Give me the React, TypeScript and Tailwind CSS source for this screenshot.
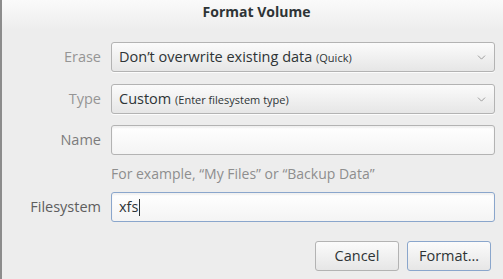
import { ChevronDown } from "lucide-react";

const font = { fontFamily: '"Open Sans", "Noto Sans", sans-serif' };

function Select({ main, hint }: { main: string; hint: string }) {
  return (
    <div className="flex h-[30px] items-center justify-between rounded-[3px] border border-[#b3b3b3] bg-gradient-to-b from-[#fbfbfb] to-[#e6e6e6] pl-[7px] pr-[6px] shadow-[0_1px_0_rgba(255,255,255,0.8)]">
      <span className="text-[14.5px] text-[#2e3436]">
        {main} <span className="text-[11px]">{hint}</span>
      </span>
      <ChevronDown className="h-[13px] w-[13px] text-[#8a8a8a]" strokeWidth={1.5} />
    </div>
  );
}

function Field({ value, focused }: { value?: string; focused?: boolean }) {
  return (
    <div
      className={`flex h-[30px] items-center rounded-[3px] border bg-gradient-to-b from-[#ffffff] to-[#f4f4f4] px-[7px] shadow-[inset_0_2px_2px_rgba(0,0,0,0.06)] ${
        focused ? "border-[#8aa6cc]" : "border-[#b3b3b3]"
      }`}
    >
      {value && (
        <span className="flex items-center text-[14.5px] text-[#2e3436]">
          {value}
          <span className="ml-[1px] inline-block h-[17px] w-px bg-[#2e3436]" />
        </span>
      )}
    </div>
  );
}

export default function App() {
  return (
    <div
      className="flex h-[279px] w-[503px] flex-col overflow-hidden border-l-2 border-[#8c8c8c] bg-[#ededed]"
      style={font}
    >
      <div className="flex h-[30px] items-start justify-center bg-gradient-to-b from-[#fafafa] to-[#ededed] pt-[1px] pl-[8px]">
        <h1 className="text-[14px] font-bold text-[#2e3436]">Format Volume</h1>
      </div>

      <div className="grid grid-cols-[99px_1fr] items-center gap-x-[10px] pt-[12px] pr-[8px]">
        <span className="text-right text-[14.5px] text-[#959595]">Erase</span>
        <Select main="Don’t overwrite existing data" hint="(Quick)" />

        <span className="mt-[12px] text-right text-[14.5px] text-[#959595]">Type</span>
        <div className="mt-[12px]">
          <Select main="Custom" hint="(Enter filesystem type)" />
        </div>

        <span className="mt-[11px] text-right text-[14.5px] text-[#7c7c7c]">Name</span>
        <div className="mt-[11px]">
          <Field />
        </div>

        <span />
        <p className="flex h-[37px] items-center text-[14px] text-[#8e8e8e]">
          For example, “My Files” or “Backup Data”
        </p>

        <span className="text-right text-[14.5px] text-[#5e5e5e]">Filesystem</span>
        <Field value="xfs" focused />
      </div>

      <div className="flex justify-end gap-[8px] pt-[19px] pr-[12px]">
        <button className="h-[30px] w-[84px] rounded-[3px] border border-[#b3b3b3] bg-gradient-to-b from-[#fbfbfb] to-[#e6e6e6] text-[14.5px] text-[#2e3436]">
          Cancel
        </button>
        <button className="h-[30px] w-[84px] rounded-[3px] border border-[#8aa6cc] bg-gradient-to-b from-[#fbfbfb] to-[#e6e6e6] text-[14.5px] text-[#2e3436]">
          Format…
        </button>
      </div>
    </div>
  );
}
